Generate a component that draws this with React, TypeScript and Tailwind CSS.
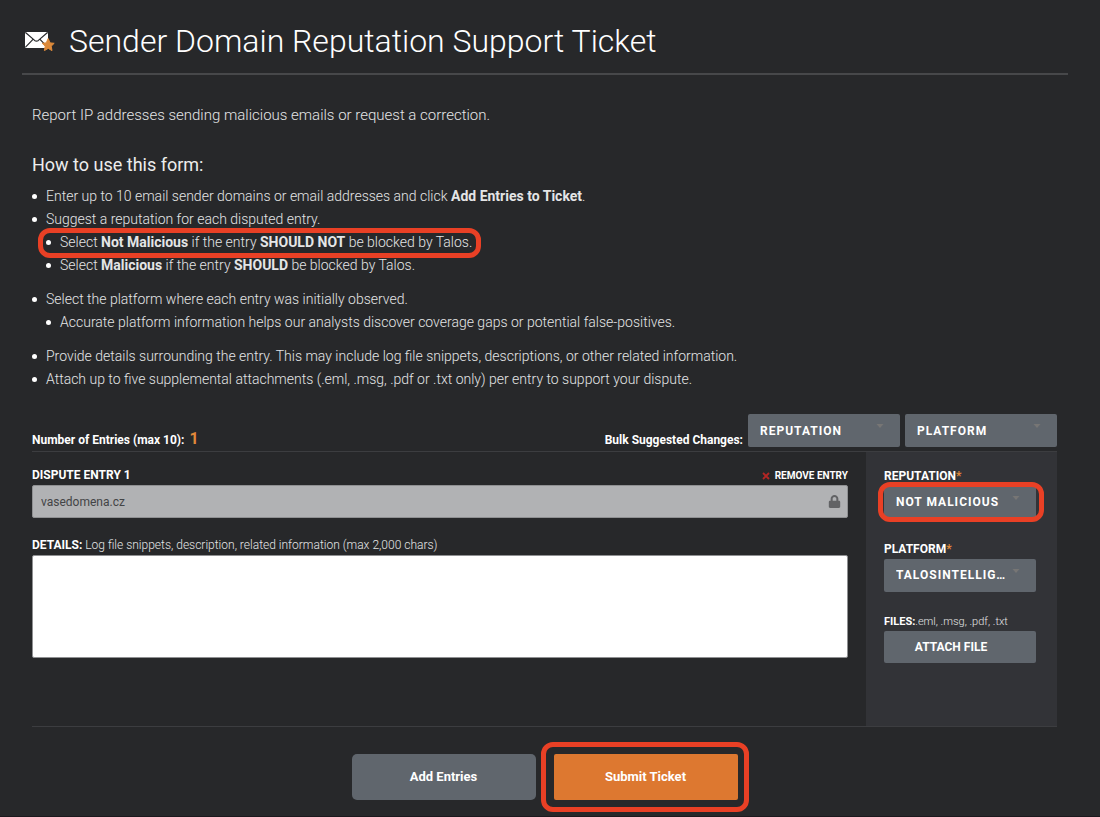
import React from 'react';
import { FaLock } from 'react-icons/fa';

const MailStarIcon = () => (
  <svg width="32" height="24" viewBox="0 0 32 24" aria-hidden="true">
    <rect x="1" y="3" width="23" height="16" rx="1.5" fill="#ffffff" />
    <path d="M1.5 3.5 L10.6 11.4 Q12.5 12.8 14.4 11.4 L23.5 3.5 M1.5 18.2 L9 10.4 M23.5 18.2 L16 10.4" fill="none" stroke="#27282a" strokeWidth="1.2" />
    <path
      d="M24.2 9.6 L26.2 13.9 L30.2 14.3 L27.2 17.2 L28 21.6 L24.2 19.4 L20.4 21.6 L21.2 17.2 L18.2 14.3 L22.2 13.9 Z"
      fill="#dd8a3a"
      stroke="#dd8a3a"
      strokeWidth="1"
      strokeLinejoin="round"
    />
  </svg>
);

/* Red ring drawn around the steps that matter; the parent must be relative */
const Ring = ({ className }: { className: string }) => (
  <span aria-hidden="true" className={`pointer-events-none absolute border-[5px] border-[#e94025] ${className}`} />
);

const Item = ({ children }: { children: React.ReactNode }) => (
  <li className="relative w-fit before:absolute before:top-[9px] before:-left-[14px] before:size-[5px] before:rounded-full before:bg-white">
    {children}
  </li>
);

interface DropdownProps {
  id: string;
  value: string;
  options: string[];
  label?: string;
}

const Dropdown = ({ id, value, options, label }: DropdownProps) => (
  <div className="relative w-[152px]">
    <select
      id={id}
      aria-label={label}
      defaultValue={value}
      className="block h-[33px] w-full appearance-none truncate rounded-xs bg-[#60666d] pr-7 pl-3 text-[12px] font-bold tracking-[1px] text-white uppercase"
    >
      {options.map((option) => (
        <option key={option}>{option}</option>
      ))}
    </select>
    <svg className="pointer-events-none absolute top-[10px] right-4 h-1 w-2" viewBox="0 0 8 4" aria-hidden="true">
      <path d="M0.5 0 H7.5 L4 4 Z" fill="#777675" />
    </svg>
  </div>
);

export default function App() {
  return (
    <div className="min-h-screen border-b border-[#1c181d] bg-[#27282a] pb-4 font-[Roboto,sans-serif] font-light text-[#e4e5e6]">
      <header className="mr-8 ml-[22px] flex items-center gap-[13px] border-b-2 border-[#47484a] pt-[21px] pb-3 pl-0.5">
        <MailStarIcon />
        <h1 className="text-[32px] leading-10 text-white">Sender Domain Reputation Support Ticket</h1>
      </header>

      <main className="mr-[43px] ml-8">
        <p className="mt-[29px] text-[15px] leading-[23px]">
          Report IP addresses sending malicious emails or request a correction.
        </p>

        <h2 className="mt-[26px] text-[18px] leading-6 font-normal text-[#ededed]">How to use this form:</h2>
        <ul className="mt-2 pl-[14px] text-[14px] leading-[23px]">
          <Item>
            Enter up to 10 email sender domains or email addresses and click{' '}
            <b className="font-bold">Add Entries to Ticket</b>.
          </Item>
          <Item>
            Suggest a reputation for each disputed entry.
            <ul className="mb-[11px] pl-[14px]">
              <Item>
                Select <b className="font-bold">Not Malicious</b> if the entry <b className="font-bold">SHOULD NOT</b> be
                blocked by Talos.
                <Ring className="-top-[3px] -right-[9px] -bottom-1 -left-[22px] rounded-xl" />
              </Item>
              <Item>
                Select <b className="font-bold">Malicious</b> if the entry <b className="font-bold">SHOULD</b> be blocked
                by Talos.
              </Item>
            </ul>
          </Item>
          <Item>
            Select the platform where each entry was initially observed.
            <ul className="mb-[11px] pl-[14px]">
              <Item>Accurate platform information helps our analysts discover coverage gaps or potential false-positives.</Item>
            </ul>
          </Item>
          <Item>
            Provide details surrounding the entry. This may include log file snippets, descriptions, or other related
            information.
          </Item>
          <Item>
            Attach up to five supplemental attachments (.eml, .msg, .pdf or .txt only) per entry to support your dispute.
          </Item>
        </ul>

        <form onSubmit={(e) => e.preventDefault()}>
          <div className="mt-[23px] flex items-end justify-between border-b border-[#3c3d40] pb-1 text-[12px] leading-[14px] font-bold text-white">
            <p className="flex items-baseline gap-[5px]">
              Number of Entries (max 10): <span className="text-[16px] text-[#e0883a]">1</span>
            </p>
            <div className="flex items-end gap-[5px]">
              <span>Bulk Suggested Changes:</span>
              <Dropdown id="bulk-reputation" label="Bulk reputation" value="Reputation" options={['Reputation', 'Malicious', 'Not Malicious']} />
              <Dropdown id="bulk-platform" label="Bulk platform" value="Platform" options={['Platform', 'TalosIntelligence']} />
            </div>
          </div>

          <section className="flex gap-[18px] border-b border-[#3c3d40] text-[12px] leading-[19px]">
            <div className="min-w-0 grow pt-[14px] pb-[68px]">
              <div className="flex justify-between font-bold text-white">
                <label htmlFor="entry">DISPUTE ENTRY 1</label>
                <button type="button" className="flex items-center gap-[5px] text-[10px]">
                  <svg width="8" height="8" viewBox="0 0 8 8" aria-hidden="true">
                    <path d="M1 1 L7 7 M7 1 L1 7" stroke="#b32624" strokeWidth="1.8" />
                  </svg>
                  REMOVE ENTRY
                </button>
              </div>
              <div className="relative">
                <input
                  id="entry"
                  readOnly
                  defaultValue="vasedomena.cz"
                  className="block h-[33px] w-full rounded-xs border border-[#8f9092] bg-[#b1b2b4] px-2 text-[12px] font-normal text-[#434446]"
                />
                <FaLock className="absolute top-[10px] right-[7px] text-[#626365]" size={13} />
              </div>
              <label htmlFor="details" className="mt-[18px] block">
                <b className="font-bold text-white">DETAILS:</b> Log file snippets, description, related information (max
                2,000 chars)
              </label>
              <textarea id="details" className="block h-[103px] w-full resize-none rounded-xs border border-[#8f9092] bg-white p-2 text-[#27282a]" />
            </div>

            <aside className="flex shrink-0 flex-col gap-[21px] bg-[#323337] pt-[15px] pr-[21px] pl-[18px]">
              <div>
                <label htmlFor="reputation" className="block font-bold text-white">
                  REPUTATION<span className="text-[#e0883a]">*</span>
                </label>
                <div className="relative">
                  <Dropdown id="reputation" value="Not Malicious" options={['Malicious', 'Not Malicious']} />
                  <Ring className="-top-1 -right-2 -bottom-[3px] -left-[6px] rounded-xl" />
                </div>
              </div>
              <div>
                <label htmlFor="platform" className="block font-bold text-white">
                  PLATFORM<span className="text-[#e0883a]">*</span>
                </label>
                <Dropdown id="platform" value="TalosIntelligence" options={['TalosIntelligence']} />
              </div>
              <div>
                <p className="text-[11px] leading-[18px]">
                  <b className="font-bold text-white">FILES:</b>.eml, .msg, .pdf, .txt
                </p>
                <button type="button" className="h-8 w-[152px] rounded-xs bg-[#60666d] pr-[18px] text-[12px] font-bold text-white">
                  ATTACH FILE
                </button>
              </div>
            </aside>
          </section>

          <div className="mt-[27px] flex justify-center gap-[18px] text-[13px] font-bold text-white">
            <button type="button" className="h-[46px] w-[184px] rounded-[5px] bg-[#60666d]">
              Add Entries
            </button>
            <div className="relative">
              <button type="submit" className="block h-[46px] w-[184px] rounded-xs bg-[#dd7830]">
                Submit Ticket
              </button>
              <Ring className="-inset-y-3 -right-[11px] -left-[13px] rounded-xl" />
            </div>
          </div>
        </form>
      </main>
    </div>
  );
}
